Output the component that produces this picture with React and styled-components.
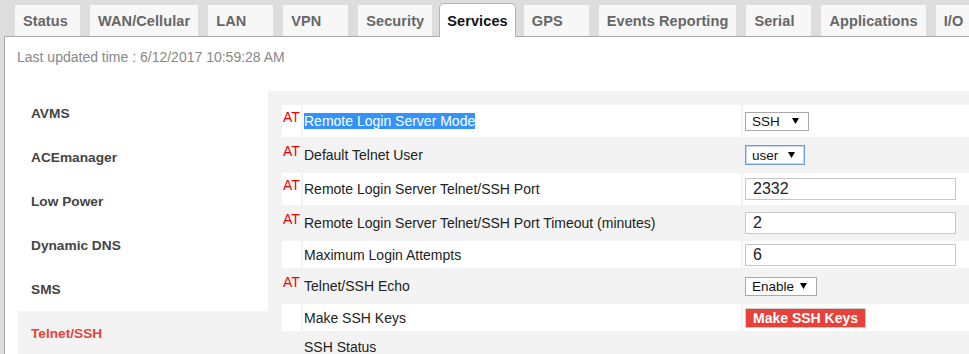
import React from 'react';
import styled, { createGlobalStyle } from 'styled-components';

const Global = createGlobalStyle`
  html, body { margin: 0; padding: 0; overflow: hidden; background: #dddddd; }
  body { font-family: "Liberation Sans", Arial, sans-serif; }
  #root { width: 1100px; }
`;

const Page = styled.div`
  padding: 3px 0 0 4px;
`;

const TabBar = styled.nav`
  display: flex;
  align-items: flex-end;
  gap: 10px;
  height: 33px;
  padding-left: 11px;
  position: relative;
  z-index: 1;
`;

const Tab = styled.div`
  box-sizing: border-box;
  flex-shrink: 0;
  height: ${p => (p.$active ? 34 : 31)}px;
  min-width: 65px;
  padding: 0 ${p => (p.$active ? 7 : 8)}px;
  display: flex;
  align-items: center;
  font-size: 14.5px;
  letter-spacing: 0.1px;
  font-weight: bold;
  white-space: nowrap;
  color: ${p => (p.$active ? '#111' : '#666')};
  background: ${p => (p.$active ? '#fff' : '#f7f7f7')};
  border: ${p => (p.$active ? '1px solid #b3b3b3' : 'none')};
  border-bottom: none;
  border-radius: ${p => (p.$active ? '5px 5px 0 0' : '0')};
  margin: ${p => (p.$active ? '0 -2px -1px -3px' : '0')};
`;

const Panel = styled.div`
  background: #fff;
  border-top: 1px solid #aaa;
  border-left: 1px solid #aaa;
  min-height: 400px;
  padding: 12px 0 0 0;
`;

const Updated = styled.div`
  padding-left: 12px;
  font-size: 14px;
  line-height: 16px;
  color: #888;
`;

const Main = styled.div`
  display: flex;
  margin: 26px 0 0 13px;
`;

const SideNav = styled.ul`
  list-style: none;
  margin: 0;
  padding: 0;
  width: 250px;
  flex-shrink: 0;
`;

const NavItem = styled.li`
  height: 44px;
  display: flex;
  align-items: center;
  padding-left: 13px;
  font-size: 13.7px;
  font-weight: bold;
  color: ${p => (p.$active ? '#e5433b' : '#444')};
  background: ${p => (p.$active ? '#f3f3f3' : 'transparent')};
`;

const Content = styled.section`
  flex: 1;
  background: #f3f3f3;
  padding: 12px 0 40px 12px;
`;

const Table = styled.table`
  border-collapse: separate;
  border-spacing: 2px;
`;

const Row = styled.tr`
  height: ${p => (p.$tall ? 32 : 27)}px;
`;

const AtCell = styled.td`
  width: 19px;
  padding: 5px 0 0 1px;
  box-sizing: border-box;
  vertical-align: top;
  font-size: 14px;
  line-height: 15px;
  color: #f00000;
  background: ${p => (p.$odd ? '#fff' : 'transparent')};
`;

const LabelCell = styled.td`
  width: 438px;
  padding: 0 0 0 1px;
  box-sizing: border-box;
  vertical-align: middle;
  font-size: 14px;
  line-height: 16px;
  color: #222;
  background: ${p => (p.$odd ? '#fff' : 'transparent')};
`;

const ValueCell = styled.td`
  width: 240px;
  padding: 0 0 0 2px;
  vertical-align: middle;
  background: ${p => (p.$odd ? '#fff' : 'transparent')};
`;

const Selected = styled.span`
  background: #3393fb;
  color: #fff;
`;

const SelectBox = styled.div`
  box-sizing: border-box;
  width: ${p => p.$width}px;
  height: ${p => (p.$focus ? 20 : 19)}px;
  display: flex;
  align-items: center;
  justify-content: space-between;
  padding: 0 9px 0 6px;
  background: #fff;
  border: 1px solid ${p => (p.$focus ? '#6e9be0' : '#a9a9a9')};
  box-shadow: ${p => (p.$focus ? '0 0 0 1px #c6d8f5 inset' : 'none')};
  font-size: 13.5px;
  color: #111;
`;

const TextInput = styled.input`
  box-sizing: border-box;
  width: 211px;
  height: 22px;
  margin: 0;
  padding: 0 7px;
  border: 1px solid #c6c6c6;
  background: #fff;
  font-family: "Liberation Sans", Arial, sans-serif;
  font-size: 16px;
  color: #222;
  outline: none;
`;

const RedButton = styled.button`
  box-sizing: border-box;
  height: 20px;
  margin: 0;
  padding: 0 7px;
  border: 1px solid #cfcfcf;
  background: #e8413a;
  color: #fff;
  font-family: "Liberation Sans", Arial, sans-serif;
  font-size: 14px;
  font-weight: bold;
  line-height: 18px;
  white-space: nowrap;
`;

const Arrow = () => (
  <svg width="7" height="6" viewBox="0 0 7 6" aria-hidden="true">
    <polygon points="0,0 7,0 3.5,6" fill="#000" />
  </svg>
);

const tabs = ['Status', 'WAN/Cellular', 'LAN', 'VPN', 'Security', 'Services', 'GPS', 'Events Reporting', 'Serial', 'Applications', 'I/O'];
const navItems = ['AVMS', 'ACEmanager', 'Low Power', 'Dynamic DNS', 'SMS', 'Telnet/SSH'];

const rows = [
  { at: true, label: 'Remote Login Server Mode', selected: true, value: { type: 'select', text: 'SSH', width: 64 } },
  { at: true, label: 'Default Telnet User', value: { type: 'select', text: 'user', width: 60, focus: true } },
  { at: true, label: 'Remote Login Server Telnet/SSH Port', value: { type: 'input', text: '2332' } },
  { at: true, label: 'Remote Login Server Telnet/SSH Port Timeout (minutes)', value: { type: 'input', text: '2' } },
  { at: false, label: 'Maximum Login Attempts', value: { type: 'input', text: '6' } },
  { at: true, label: 'Telnet/SSH Echo', value: { type: 'select', text: 'Enable', width: 72 } },
  { at: false, label: 'Make SSH Keys', value: { type: 'button', text: 'Make SSH Keys' } },
  { at: false, label: 'SSH Status', value: null },
];

function Value({ v }) {
  if (!v) return null;
  if (v.type === 'select') {
    return (
      <SelectBox $width={v.width} $focus={v.focus}>
        <span>{v.text}</span>
        <Arrow />
      </SelectBox>
    );
  }
  if (v.type === 'input') return <TextInput defaultValue={v.text} />;
  return <RedButton type="button">{v.text}</RedButton>;
}

export default function App() {
  return (
    <>
      <Global />
      <Page>
        <TabBar>
          {tabs.map(t => (
            <Tab key={t} $active={t === 'Services'}>{t}</Tab>
          ))}
        </TabBar>
        <Panel>
          <Updated>Last updated time : 6/12/2017 10:59:28 AM</Updated>
          <Main>
            <SideNav>
              {navItems.map(n => (
                <NavItem key={n} $active={n === 'Telnet/SSH'}>{n}</NavItem>
              ))}
            </SideNav>
            <Content>
              <Table>
                <tbody>
                  {rows.map((r, i) => {
                    const odd = i % 2 === 0;
                    return (
                      <Row key={r.label} $tall={r.at}>
                        <AtCell $odd={odd}>{r.at ? 'AT' : ''}</AtCell>
                        <LabelCell $odd={odd}>
                          {r.selected ? <Selected>{r.label}</Selected> : r.label}
                        </LabelCell>
                        <ValueCell $odd={odd}>
                          <Value v={r.value} />
                        </ValueCell>
                      </Row>
                    );
                  })}
                </tbody>
              </Table>
            </Content>
          </Main>
        </Panel>
      </Page>
    </>
  );
}
